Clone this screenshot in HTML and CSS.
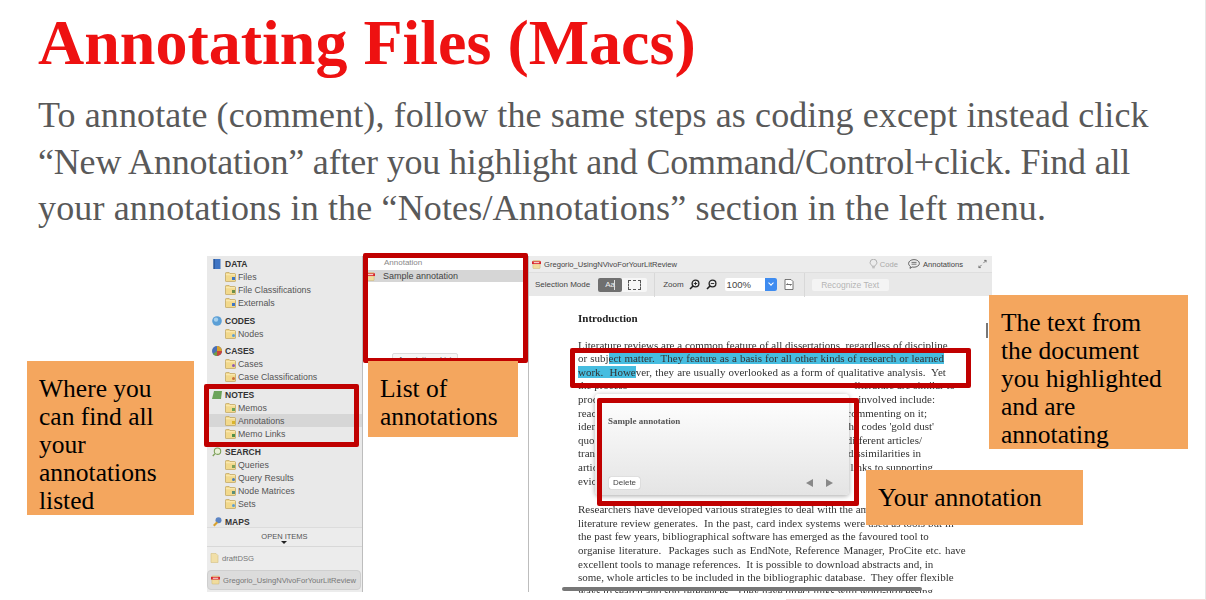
FILE: index.html
```html
<!DOCTYPE html>
<html lang="en">
<head>
  <meta charset="UTF-8">
  <title>Annotating Files (Macs)</title>
  <link rel="stylesheet" href="styles.css">
</head>
<body>
  <svg class="defs" width="0" height="0">
    <symbol id="folder" viewBox="0 0 12 11">
      <path d="M.5 2.5V1.5q0-1 1-1h3l1 1.2h5q1 0 1 1V9.8q0 .7-.7.7H1.2q-.7 0-.7-.7z" fill="#f2d98c" stroke="#b89a4e" stroke-width=".7"/>
      <path d="M1 3h10" stroke="#fff3c8" stroke-width=".8"/>
    </symbol>
    <symbol id="doc-red" viewBox="0 0 10 10">
      <rect x="1" y=".5" width="8" height="9" rx="1" fill="#f1dc9d" stroke="#c9b06a" stroke-width=".5"/>
      <rect x="0" y="1.5" width="10" height="3" fill="#d8262c"/>
      <rect x="2" y="2.5" width="6" height="1" fill="#fff"/>
    </symbol>
  </svg>

  <main class="slide">
    <h1>Annotating Files (Macs)</h1>
    <p class="lead">
      <span class="lead-line lead-a">To annotate (comment), follow the same steps as coding except instead click</span>
      <span class="lead-line lead-b">“New Annotation” after you highlight and Command/Control+click. Find all</span>
      <span class="lead-line lead-c">your annotations in the “Notes/Annotations” section in the left menu.</span>
    </p>

    <div class="app">
      <aside class="sidebar">
        <div class="nav-groups">
          <div class="group">
            <div class="group-head">
              <svg class="head-icon" viewBox="0 0 10 10"><rect x="1.5" y="0" width="7" height="10" fill="#3f75c4"/><rect x="1.5" y="0" width="1.2" height="10" fill="#27508f"/></svg>
              DATA
            </div>
            <div class="nav-row"><svg class="folder"><use href="#folder"/></svg><svg class="badge"><rect width="3" height="3" fill="#3f75c4"/></svg>Files</div>
            <div class="nav-row"><svg class="folder"><use href="#folder"/></svg><svg class="badge"><rect width="3" height="3" fill="#6d8f4a"/></svg>File Classifications</div>
            <div class="nav-row"><svg class="folder"><use href="#folder"/></svg><svg class="badge"><rect width="3" height="3" fill="#3f75c4"/></svg>Externals</div>
          </div>
          <div class="group group-tight">
            <div class="group-head">
              <svg class="head-icon" viewBox="0 0 10 10"><circle cx="5" cy="5" r="4.8" fill="#5b9fd6"/><circle cx="4" cy="3.6" r="2.2" fill="#a5d0ee"/></svg>
              CODES
            </div>
            <div class="nav-row"><svg class="folder"><use href="#folder"/></svg><svg class="badge"><circle cx="1.5" cy="1.5" r="1.5" fill="#5b9fd6"/></svg>Nodes</div>
          </div>
          <div class="group">
            <div class="group-head">
              <svg class="head-icon" viewBox="0 0 10 10"><circle cx="5" cy="5" r="5" fill="#4a6fb5"/><path d="M5 5V0a5 5 0 0 1 5 5z" fill="#d9a22e"/><path d="M5 5h5a5 5 0 0 1-5 5z" fill="#c8453a"/><path d="M5 5v5a5 5 0 0 1-4-2z" fill="#6f9d45"/></svg>
              CASES
            </div>
            <div class="nav-row"><svg class="folder"><use href="#folder"/></svg><svg class="badge"><circle cx="1.5" cy="1.5" r="1.5" fill="#8a5bb5"/></svg>Cases</div>
            <div class="nav-row"><svg class="folder"><use href="#folder"/></svg><svg class="badge"><circle cx="1.5" cy="1.5" r="1.5" fill="#c8703a"/></svg>Case Classifications</div>
          </div>
          <div class="group">
            <div class="group-head">
              <svg class="head-icon" viewBox="0 0 10 10"><path d="M2 1h8l-1 8H0z" fill="#6aa35a"/></svg>
              NOTES
            </div>
            <div class="nav-row"><svg class="folder"><use href="#folder"/></svg><svg class="badge"><rect width="3" height="3" fill="#6aa35a"/></svg>Memos</div>
            <div class="nav-row is-active"><svg class="folder"><use href="#folder"/></svg><svg class="badge"><rect width="3" height="3" fill="#d9b52e"/></svg>Annotations</div>
            <div class="nav-row"><svg class="folder"><use href="#folder"/></svg><svg class="badge"><rect width="3" height="3" fill="#4f8f4a"/></svg>Memo Links</div>
          </div>
          <div class="group">
            <div class="group-head">
              <svg class="head-icon" viewBox="0 0 10 10"><circle cx="5.5" cy="4.2" r="3.2" fill="#e8f0d8" stroke="#7da05a" stroke-width="1.1"/><path d="M3 6.6.8 9" stroke="#7da05a" stroke-width="1.4"/></svg>
              SEARCH
            </div>
            <div class="nav-row"><svg class="folder"><use href="#folder"/></svg><svg class="badge"><rect width="3" height="3" fill="#7da05a"/></svg>Queries</div>
            <div class="nav-row"><svg class="folder"><use href="#folder"/></svg><svg class="badge"><circle cx="1.5" cy="1.5" r="1.5" fill="#4f7fb5"/></svg>Query Results</div>
            <div class="nav-row"><svg class="folder"><use href="#folder"/></svg><svg class="badge"><rect width="3" height="3" fill="#5a8f7a"/></svg>Node Matrices</div>
            <div class="nav-row"><svg class="folder"><use href="#folder"/></svg><svg class="badge"><circle cx="1.5" cy="1.5" r="1.5" fill="#5b9fd6"/></svg>Sets</div>
          </div>
          <div class="group">
            <div class="group-head">
              <svg class="head-icon" viewBox="0 0 10 10"><circle cx="6.5" cy="3.2" r="3" fill="#5b84c4"/><path d="M4.5 4.5 1 8l1.500 1.500L6 6z" fill="#d9a22e"/></svg>
              MAPS
            </div>
          </div>
        </div>
        <div class="open-items">
          <div class="open-title">OPEN ITEMS<span class="open-arrow"></span></div>
          <div class="open-row">
            <svg class="open-icon" viewBox="0 0 8 10"><path d="M.5.5h5l2 2v7H.5z" fill="#f1dfa8" stroke="#d3bf82" stroke-width=".6"/></svg>
            draftDSG
          </div>
          <div class="open-row open-current">
            <svg class="open-icon"><use href="#doc-red"/></svg>
            Gregorio_UsingNVivoForYourLitReview
          </div>
        </div>
      </aside>

      <section class="list-panel">
        <div class="list-head">Annotation</div>
        <div class="list-row"><svg class="list-icon"><use href="#doc-red"/></svg>Sample annotation</div>
        <div class="list-button">Annotations List</div>
      </section>

      <section class="viewer">
        <div class="title-bar">
          <svg class="list-icon"><use href="#doc-red"/></svg>
          <span class="doc-title">Gregorio_UsingNVivoForYourLitReview</span>
          <span class="code-link">
            <svg class="tb-icon" viewBox="0 0 10 11"><path d="M3.400 8C3.200 6.600 1.200 5.800 1.200 4a3.800 3.800 0 0 1 7.600 0c0 1.800-2 2.600-2.200 4zM3.600 9.700h2.800" fill="none" stroke="#999" stroke-width=".8"/></svg>
            Code
          </span>
          <span class="annot-link">
            <svg class="tb-icon tb-wide" viewBox="0 0 12 10"><path d="M6 .6c3 0 5.400 1.700 5.400 3.800S9 8.200 6 8.200c-.7 0-1.300-.1-1.900-.2L2 9.400l.4-2C1.300 6.700.6 5.600.6 4.400.6 2.300 3 .6 6 .6z" fill="none" stroke="#444" stroke-width=".8"/><path d="M3.500 3.400h5M3.500 5.200h5" stroke="#444" stroke-width=".7"/></svg>
            Annotations
          </span>
          <svg class="tb-icon expand" viewBox="0 0 10 10"><path d="M6 4l3-3M9 1H6.800M9 1v2.200M4 6 1 9M1 9h2.200M1 9V6.800" fill="none" stroke="#555" stroke-width=".8"/></svg>
        </div>
        <div class="tool-bar">
          <span class="tool-label">Selection Mode</span>
          <div class="segment">
            <span class="seg-on">Aa</span>
            <span class="seg-off"><i></i></span>
          </div>
          <span class="tool-sep sep-a"></span>
          <span class="tool-label">Zoom</span>
          <svg class="zoom-icon" viewBox="0 0 11 11"><circle cx="6.500" cy="4.500" r="3.400" fill="none" stroke="#222" stroke-width="1.300"/><path d="M4 7 1 10" stroke="#222" stroke-width="1.600"/><path d="M4.800 4.500h3.400M6.500 2.800v3.400" stroke="#222" stroke-width=".9"/></svg>
          <svg class="zoom-icon" viewBox="0 0 11 11"><circle cx="6.500" cy="4.500" r="3.400" fill="none" stroke="#222" stroke-width="1.300"/><path d="M4 7 1 10" stroke="#222" stroke-width="1.600"/><path d="M4.800 4.500h3.400" stroke="#222" stroke-width=".9"/></svg>
          <div class="zoom-select">100%<span class="select-cap"></span></div>
          <svg class="fit-icon" viewBox="0 0 10 11"><path d="M1 .5h6l2 2v8H1z" fill="#fff" stroke="#555" stroke-width=".8"/><path d="M2.500 5.500h5M2.500 5.500l1.200-1M7.500 5.500l-1.200 1" stroke="#333" stroke-width=".7" fill="none"/></svg>
          <span class="tool-sep sep-b"></span>
          <span class="recognize">Recognize Text</span>
        </div>

        <div class="doc">
          <div class="doc-heading">Introduction</div>
          <div class="para">
            <div class="line">Literature reviews are a common feature of all dissertations, regardless of discipline</div>
            <div class="line ws-s">or subj<mark>ect matter.  They feature as a basis for all other kinds of research or learned</mark></div>
            <div class="line ws-s"><mark>work.  Howe</mark>ver, they are usually overlooked as a form of qualitative analysis.  Yet</div>
            <div class="line split w377"><span>the process</span><span>literature are similar to</span></div>
            <div class="line split w357"><span>proc</span><span>involved include:</span></div>
            <div class="line split w349"><span>reac</span><span>commenting on it;</span></div>
            <div class="line split w356"><span>iden</span><span>the codes 'gold dust'</span></div>
            <div class="line split w344"><span>quo</span><span>different articles/</span></div>
            <div class="line split w343"><span>tran</span><span>dissimilarities in</span></div>
            <div class="line split w355"><span>artic</span><span>links to supporting</span></div>
            <div class="line">evic</div>
          </div>
          <div class="para">
            <div class="line">Researchers have developed various strategies to deal with the amount of</div>
            <div class="line ws-s">literature review generates.  In the past, card index systems were used as tools but in</div>
            <div class="line">the past few years, bibliographical software has emerged as the favoured tool to</div>
            <div class="line ws-l">organise literature.  Packages such as EndNote, Reference Manager, ProCite etc. have</div>
            <div class="line">excellent tools to manage references.  It is possible to download abstracts and, in</div>
            <div class="line">some, whole articles to be included in the bibliographic database.  They offer flexible</div>
            <div class="line">ways to search and sort references.  They have direct links with word-processing</div>
          </div>
          <div class="popup">
            <div class="popup-text">Sample annotation</div>
            <div class="popup-foot">
              <span class="delete-btn">Delete</span>
              <span class="pager"><i class="arrow-left"></i><i class="arrow-right"></i></span>
            </div>
          </div>
        </div>
        <span class="v-scroll"></span>
        <span class="h-scroll"></span>
      </section>
    </div>

    <div class="frame frame-list"></div>
    <div class="frame frame-notes"></div>
    <div class="frame frame-text"></div>
    <div class="frame frame-popup"></div>

    <div class="note note-where">Where you<br>can find all<br>your<br>annotations<br>listed</div>
    <div class="note note-list">List of<br>annotations</div>
    <div class="note note-text">The text from<br>the document<br>you highlighted<br>and are<br>annotating</div>
    <div class="note note-yours">Your annotation</div>

    <span class="next-edge"></span>
  </main>
</body>
</html>
```

FILE: styles.css
```css
body {
  margin: 0;
  background-color: white;
  overflow: hidden;
}

.defs {
  position: absolute;
}

.slide {
  position: relative;
  width: 1205px;
  height: 600px;
  border-right: 1px solid #e6e6e6;
  overflow: hidden;
  font-family: "Liberation Serif", serif;
}

h1 {
  margin: 0;
  padding: 5px 0 0 38px;
  height: 80px;
  box-sizing: border-box;
  font-size: 64px;
  line-height: 76px;
  font-weight: bold;
  color: #ee1111;
  white-space: nowrap;
}

.lead {
  margin: 0;
  padding: 12px 0 0 38px;
  height: 176px;
  box-sizing: border-box;
  font-size: 36px;
  line-height: 46.5px;
  color: #595959;
  white-space: nowrap;
}

.lead-line {
  display: block;
}

.lead-a {
  letter-spacing: 0.1px;
}

.lead-b {
  letter-spacing: -0.18px;
}

.lead-c {
  letter-spacing: 0.15px;
}

/* app screenshot */
.app {
  display: flex;
  margin-left: 207px;
  width: 785px;
  height: 337px;
  font-family: "Liberation Sans", sans-serif;
  font-size: 8.8px;
  color: #444;
  filter: blur(0.35px);
}

.sidebar {
  display: flex;
  flex-direction: column;
  width: 155px;
  height: 336px;
  background-color: #e9e9e9;
  border-right: 1px solid #bdbdbd;
  overflow: hidden;
}

.nav-groups {
  display: flex;
  flex-direction: column;
  gap: 6px;
  height: 271px;
  padding-top: 2px;
  box-sizing: border-box;
  overflow: hidden;
}

.group-tight {
  margin-bottom: -1px;
}

.group-head {
  display: flex;
  align-items: center;
  height: 12px;
  padding-left: 5px;
  font-size: 8.5px;
  font-weight: bold;
  color: #333;
}

.head-icon {
  width: 10px;
  height: 10px;
  margin-right: 3px;
}

.nav-row {
  position: relative;
  display: flex;
  align-items: center;
  height: 13px;
  padding-left: 18px;
  color: #555;
}

.nav-row.is-active {
  background-color: #d6d6d6;
}

.folder {
  width: 11px;
  height: 10px;
  margin-right: 2px;
}

.badge {
  position: absolute;
  left: 25px;
  top: 7px;
  width: 3px;
  height: 3px;
}

.open-items {
  flex: 1;
  background-color: #ececec;
  border-top: 1px solid #dcdcdc;
}

.open-title {
  position: relative;
  height: 18px;
  border-bottom: 1px solid #d8d8d8;
  text-align: center;
  font-size: 7.5px;
  line-height: 18px;
  color: #555;
}

.open-arrow {
  position: absolute;
  left: 74px;
  top: 13px;
  border: 3px solid transparent;
  border-top: 3px solid #222;
}

.open-row {
  display: flex;
  align-items: center;
  height: 22px;
  padding-left: 3px;
  color: #777;
  font-size: 7.7px;
  white-space: nowrap;
}

.open-current {
  height: 20px;
  margin: 1px 1px 0 0;
  background-color: #dcdcdc;
  border: 1px solid #cfcfcf;
  border-radius: 4px;
  box-sizing: border-box;
  font-size: 7.6px;
}

.open-icon {
  width: 9px;
  height: 10px;
  margin-right: 3px;
}

.list-panel {
  position: relative;
  width: 165px;
  height: 336px;
  background-color: white;
  border-right: 1px solid #bdbdbd;
}

.list-head {
  height: 14px;
  padding-left: 21px;
  font-size: 8px;
  line-height: 13px;
  color: #888;
}

.list-row {
  display: flex;
  align-items: center;
  height: 12px;
  padding-left: 3px;
  background-color: #d6d6d6;
  font-size: 9px;
  color: #444;
}

.list-icon {
  width: 9px;
  height: 9px;
  margin-right: 8px;
  flex: none;
}

.list-button {
  position: absolute;
  left: 29px;
  top: 97px;
  width: 64px;
  height: 12px;
  background-color: #f6f6f6;
  border: 1px solid #dcdcdc;
  border-radius: 2px;
  text-align: center;
  font-size: 7.5px;
  line-height: 12px;
  color: #555;
}

.viewer {
  position: relative;
  flex: 1;
  background-color: white;
  overflow: hidden;
}

.title-bar {
  display: flex;
  align-items: center;
  height: 16px;
  padding: 0 5px 0 3px;
  background-color: #ececec;
}

.title-bar .list-icon {
  margin-right: 3px;
}

.doc-title {
  font-size: 7.6px;
  color: #444;
}

.code-link {
  display: flex;
  align-items: center;
  gap: 2px;
  margin-left: auto;
  color: #aaa;
  font-size: 7.6px;
}

.annot-link {
  display: flex;
  align-items: center;
  gap: 3px;
  margin-left: 10px;
  font-size: 7.6px;
  color: #444;
}

.tb-icon {
  width: 9px;
  height: 10px;
}

.tb-wide {
  width: 12px;
}

.expand {
  margin-left: 15px;
}

.tool-bar {
  display: flex;
  align-items: center;
  height: 24px;
  padding-left: 6px;
  background-color: #e8e8e8;
  border-top: 1px solid #dedede;
  box-sizing: border-box;
  font-size: 8px;
  color: #444;
}

.segment {
  display: flex;
  width: 49px;
  height: 14px;
  margin-left: 8px;
  background-color: #f7f7f7;
  border-radius: 2px;
}

.seg-on {
  position: relative;
  width: 24px;
  padding-left: 7px;
  box-sizing: border-box;
  background-color: #6f6f6f;
  border-radius: 2px;
  color: #eee;
  line-height: 14px;
}

.seg-on::after {
  content: "";
  position: absolute;
  left: 16px;
  top: 2px;
  width: 1px;
  height: 10px;
  background-color: #ddd;
}

.seg-off {
  flex: 1;
  padding: 2px 6px;
}

.seg-off i {
  display: block;
  height: 100%;
  box-sizing: border-box;
  border: 1px dashed #555;
}

.tool-sep {
  width: 1px;
  height: 24px;
  background-color: #d8d8d8;
}

.sep-a {
  margin: 0 8px 0 7px;
}

.sep-b {
  margin: 0 7px 0 10px;
}

.zoom-icon {
  width: 11px;
  height: 11px;
  margin-left: 5px;
}

.zoom-icon + .zoom-icon {
  margin-left: 6px;
}

.zoom-select {
  position: relative;
  width: 52px;
  height: 13px;
  margin-left: 8px;
  padding-left: 2px;
  box-sizing: border-box;
  background-color: white;
  border-radius: 2px;
  font-size: 9.5px;
  line-height: 14px;
}

.select-cap {
  position: absolute;
  right: 0;
  top: 0;
  width: 12px;
  height: 13px;
  background-color: #3f8cf0;
  border-radius: 0 2px 2px 0;
}

.select-cap::after {
  content: "";
  position: absolute;
  left: 4px;
  top: 3px;
  width: 3px;
  height: 3px;
  border-right: 1px solid white;
  border-bottom: 1px solid white;
  transform: rotate(45deg);
}

.fit-icon {
  width: 10px;
  height: 11px;
  margin-left: 7px;
}

.recognize {
  width: 77px;
  height: 12px;
  background-color: #f4f4f4;
  border-radius: 2px;
  text-align: center;
  line-height: 12px;
  font-size: 8.5px;
  color: #b5b5b5;
}

.doc {
  position: relative;
  height: 297px;
  padding: 16px 0 0 49px;
  box-sizing: border-box;
  overflow: hidden;
  font-family: "Liberation Serif", serif;
  font-size: 11px;
  line-height: 13.6px;
  color: #333;
}

.doc-heading {
  margin-bottom: 13px;
  font-weight: bold;
  color: #222;
}

.para {
  margin-bottom: 15px;
}

.line {
  white-space: pre;
}

.line mark {
  background-color: #46bde0;
  color: #333;
}

.ws-s {
  word-spacing: 0.3px;
}

.ws-l {
  word-spacing: 0.9px;
}

.split {
  display: flex;
  justify-content: space-between;
}

.w377 { width: 377px; }
.w357 { width: 357px; }
.w349 { width: 349px; }
.w356 { width: 356px; }
.w344 { width: 344px; }
.w343 { width: 343px; }
.w355 { width: 355px; }

.popup {
  position: absolute;
  left: 66px;
  top: 98px;
  width: 254px;
  height: 101px;
  display: flex;
  flex-direction: column;
  justify-content: space-between;
  padding: 21px 9px 6px 13px;
  box-sizing: border-box;
  background: linear-gradient(#ffffff, #e4e4e4);
  border-radius: 4px;
  box-shadow: 0 1px 5px rgba(0, 0, 0, 0.35);
}

.popup-text {
  font-size: 9px;
  line-height: 12px;
  font-weight: bold;
  color: #555;
}

.popup-foot {
  display: flex;
  justify-content: space-between;
  align-items: center;
}

.delete-btn {
  width: 31px;
  height: 12px;
  margin-left: 1px;
  background-color: white;
  border-radius: 2px;
  box-shadow: 0 0 1px rgba(0, 0, 0, 0.4);
  text-align: center;
  font-family: "Liberation Sans", sans-serif;
  font-size: 8px;
  line-height: 12px;
  color: #444;
}

.pager {
  display: flex;
  gap: 13px;
  padding-right: 7px;
}

.arrow-left {
  border: 4px solid transparent;
  border-left: 0;
  border-right: 7px solid #888;
}

.arrow-right {
  border: 4px solid transparent;
  border-right: 0;
  border-left: 7px solid #888;
}

.v-scroll {
  position: absolute;
  right: 4px;
  top: 67px;
  width: 2px;
  height: 15px;
  background-color: #777;
}

.h-scroll {
  position: absolute;
  left: 33px;
  bottom: 2px;
  width: 360px;
  height: 4px;
  border-radius: 3px;
  background-color: #777;
}

/* red call-out frames */
.frame {
  position: absolute;
  box-sizing: border-box;
  border: 5px solid #c00000;
  border-radius: 2px;
}

.frame-list {
  left: 363px;
  top: 253px;
  width: 165px;
  height: 110px;
}

.frame-notes {
  left: 204px;
  top: 384px;
  width: 155px;
  height: 63px;
}

.frame-text {
  left: 570px;
  top: 348px;
  width: 401px;
  height: 40px;
}

.frame-popup {
  left: 597px;
  top: 398px;
  width: 262px;
  height: 108px;
}

/* orange notes */
.note {
  position: absolute;
  box-sizing: border-box;
  background-color: #f4a65e;
  font-size: 25.5px;
  line-height: 28px;
  color: black;
  padding: 14px 12px;
  white-space: nowrap;
}

.note-where {
  left: 27px;
  top: 361px;
  width: 167px;
  height: 154px;
}

.note-list {
  left: 368px;
  top: 361px;
  width: 150px;
  height: 76px;
}

.note-text {
  left: 989px;
  top: 295px;
  width: 199px;
  height: 154px;
}

.note-yours {
  left: 866px;
  top: 470px;
  width: 217px;
  height: 55px;
}

/* top of the next slide peeks in at the bottom */
.next-edge {
  position: absolute;
  left: 786px;
  right: 0;
  top: 599px;
  height: 1px;
  background-color: #f6d6d6;
}
```
